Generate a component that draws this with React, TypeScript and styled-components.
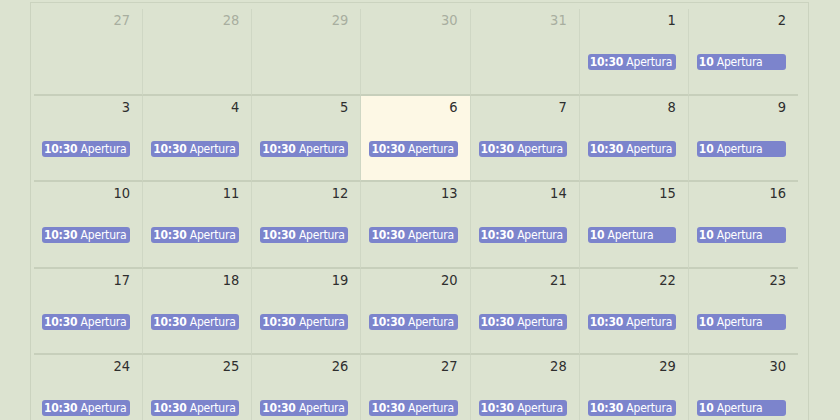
import React from "react";
import styled, { createGlobalStyle } from "styled-components";

const Global = createGlobalStyle`
  html, body { margin: 0; padding: 0; background: #dce3d0; }
  body { font-family: "DejaVu Sans Condensed", "Liberation Sans", sans-serif; }
`;

const Page = styled.div`
  width: 840px;
  height: 420px;
  overflow: hidden;
  padding: 2px 0 0 30px;
  box-sizing: border-box;
`;

const Frame = styled.div`
  width: 779px;
  border-left: 1px solid #cbd3bf;
  border-top: 1px solid #cbd3bf;
  border-right: 1px solid #cbd3bf;
  box-sizing: border-box;
  padding: 6px 10px 0 3px;
  height: 460px;
`;

const Grid = styled.div`
  display: grid;
  grid-template-columns: repeat(7, minmax(0, 1fr));
  grid-auto-rows: 86.5px;
`;

const Cell = styled.div<{ $today?: boolean; $last?: boolean }>`
  background: ${(p) => (p.$today ? "#fdf8e5" : "transparent")};
  border-bottom: 2px solid #c7cfbb;
  border-right: ${(p) => (p.$last ? "none" : "1px solid #cfd7c4")};
  padding: 1px 12px 0 8px;
  box-sizing: border-box;
  display: flex;
  flex-direction: column;
  min-width: 0;
`;

const DayNum = styled.div<{ $muted?: boolean }>`
  text-align: right;
  font-size: 14.5px;
  line-height: 20px;
  color: ${(p) => (p.$muted ? "#a8ae9f" : "#2e2e2e")};
`;

const Event = styled.div`
  margin-top: 24px;
  height: 16px;
  background: #7c84cc;
  border-radius: 3px;
  color: #ffffff;
  font-size: 12px;
  line-height: 16px;
  padding-left: 2px;
  white-space: nowrap;
  overflow: hidden;
  letter-spacing: -0.2px;
`;

const Time = styled.b`
  font-weight: 700;
`;

type Day = { n: number; muted?: boolean; time?: string; today?: boolean };

const weeks: Day[][] = [
  [
    { n: 27, muted: true },
    { n: 28, muted: true },
    { n: 29, muted: true },
    { n: 30, muted: true },
    { n: 31, muted: true },
    { n: 1, time: "10:30" },
    { n: 2, time: "10" },
  ],
  [3, 4, 5, 6, 7, 8, 9].map((n) => ({ n, time: n === 9 ? "10" : "10:30", today: n === 6 })),
  [10, 11, 12, 13, 14, 15, 16].map((n) => ({ n, time: n >= 15 ? "10" : "10:30" })),
  [17, 18, 19, 20, 21, 22, 23].map((n) => ({ n, time: n === 23 ? "10" : "10:30" })),
  [24, 25, 26, 27, 28, 29, 30].map((n) => ({ n, time: n === 30 ? "10" : "10:30" })),
];

export default function App() {
  return (
    <>
      <Global />
      <Page>
        <Frame>
          <Grid>
            {weeks.map((w, wi) =>
              w.map((d, di) => (
                <Cell key={`${wi}-${di}`} $today={d.today} $last={di === 6}>
                  <DayNum $muted={d.muted}>{d.n}</DayNum>
                  {d.time && (
                    <Event>
                      <Time>{d.time}</Time> Apertura
                    </Event>
                  )}
                </Cell>
              ))
            )}
          </Grid>
        </Frame>
      </Page>
    </>
  );
}
